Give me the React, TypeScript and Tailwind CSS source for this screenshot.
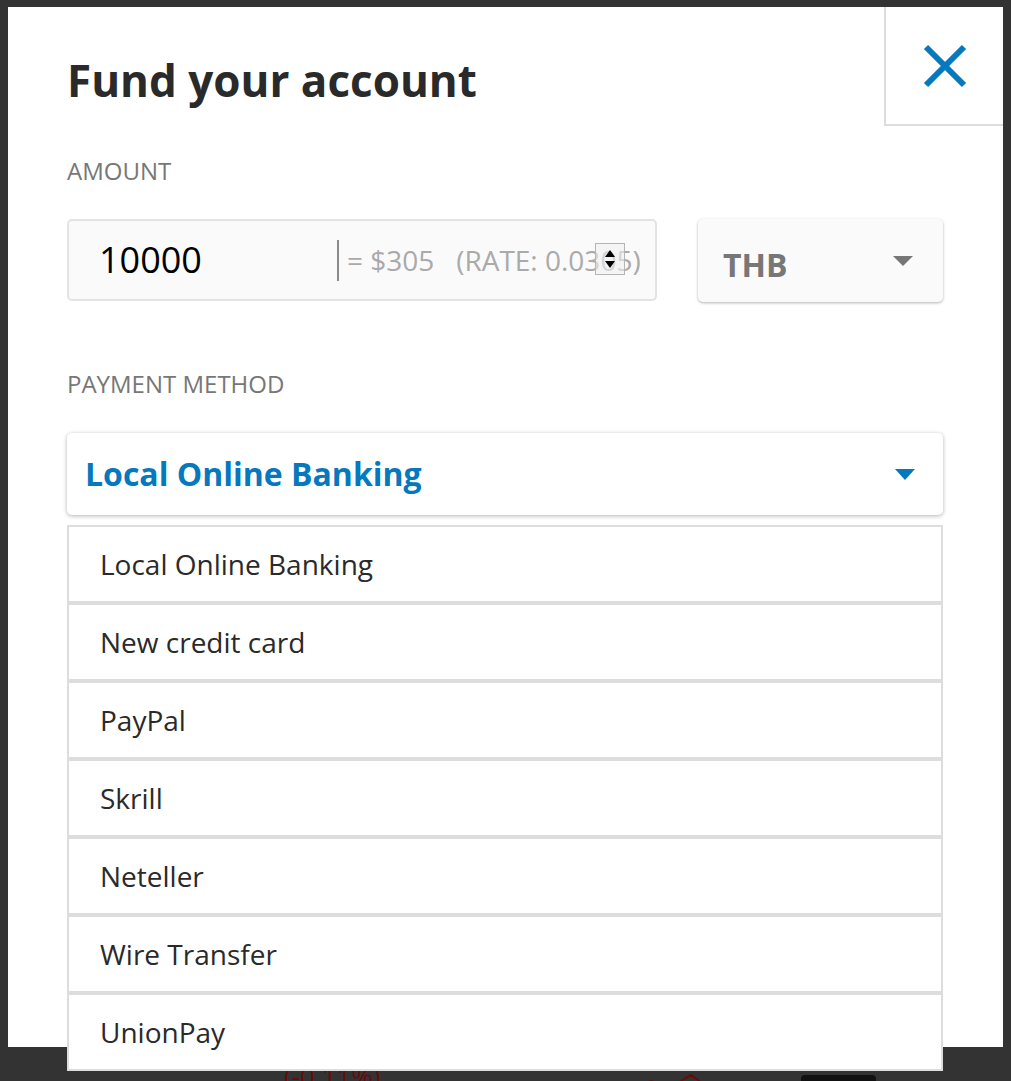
import React from "react";

const methods = [
  "Local Online Banking",
  "New credit card",
  "PayPal",
  "Skrill",
  "Neteller",
  "Wire Transfer",
  "UnionPay",
];

const App = () => {
  return (
    <div
      className="min-h-[1081px] bg-[#333333] pt-[7px] pl-[8px] overflow-hidden"
      style={{ fontFamily: '"Open Sans", "Liberation Sans", sans-serif' }}
    >
      <div className="relative w-[995px] h-[1040px] bg-white pl-[59px] pr-[60px] pt-[47px]">
        {/* close button */}
        <button className="absolute top-0 right-0 w-[119px] h-[119px] border-l-2 border-b-2 border-[#dddddd] flex items-center justify-center">
          <svg width="44" height="44" viewBox="0 0 44 44">
            <line x1="3" y1="3" x2="41" y2="41" stroke="#0678be" strokeWidth="6" />
            <line x1="41" y1="3" x2="3" y2="41" stroke="#0678be" strokeWidth="6" />
          </svg>
        </button>

        <h1 className="text-[44px] leading-[52px] font-bold text-[#2a2a2a]">
          Fund your account
        </h1>

        <div className="mt-[50px] text-[24px] leading-[30px] text-[#777777] uppercase">
          Amount
        </div>

        <div className="mt-[33px] flex gap-[41px]">
          <div className="relative w-[590px] h-[82px] bg-[#fafafa] border-2 border-[#e3e3e3] rounded-[5px] flex items-center pl-[30px]">
            <span className="w-[238px] text-[36px] text-black">10000</span>
            <div className="w-[2px] h-[41px] bg-[#8a8a8a]" />
            <span className="ml-[8px] text-[28px] text-[#aaaaaa] whitespace-nowrap">
              = $305&nbsp;&nbsp;&nbsp;(RATE: 0.0305)
            </span>
            {/* number spinner */}
            <div className="absolute left-[526px] top-[22px] w-[30px] h-[32px] border border-[#b5b5b5] bg-[#f0f0f0]/60 flex flex-col items-center justify-center gap-[4px]">
              <div className="w-0 h-0 border-l-[5px] border-r-[5px] border-b-[7px] border-l-transparent border-r-transparent border-b-black" />
              <div className="w-0 h-0 border-l-[5px] border-r-[5px] border-t-[7px] border-l-transparent border-r-transparent border-t-black" />
            </div>
          </div>

          <div className="w-[245px] h-[83px] bg-[#fafafa] rounded-[5px] shadow-[0_1px_3px_rgba(0,0,0,0.3)] flex items-center justify-between pl-[25px] pr-[30px]">
            <span className="text-[32px] font-bold text-[#777777] pt-[8px]">THB</span>
            <div className="w-0 h-0 border-l-[10px] border-r-[10px] border-t-[10px] border-l-transparent border-r-transparent border-t-[#777777]" />
          </div>
        </div>

        <div className="mt-[67px] text-[24px] leading-[30px] text-[#777777] uppercase">
          Payment Method
        </div>

        <div className="relative mt-[34px]">
          <div className="w-[876px] h-[82px] bg-white rounded-[5px] shadow-[0_1px_4px_rgba(0,0,0,0.3)] flex items-center justify-between pl-[18px] pr-[28px]">
            <span className="text-[32px] font-bold text-[#0678be]">
              Local Online Banking
            </span>
            <div className="w-0 h-0 border-l-[10px] border-r-[10px] border-t-[11px] border-l-transparent border-r-transparent border-t-[#0678be]" />
          </div>

          {/* open dropdown */}
          <ul className="absolute left-0 top-full mt-[10px] w-[876px] z-10 bg-white">
            {methods.map((m) => (
              <li
                key={m}
                className="h-[78px] border-2 border-[#dddddd] flex items-center pl-[31px] text-[28px] text-[#2a2a2a]"
              >
                {m}
              </li>
            ))}
          </ul>
        </div>
      </div>

      {/* page behind the modal */}
      <div className="h-[40px] flex items-start pt-[14px] pl-[276px]">
        <span className="text-[26px] leading-[30px] text-[#6b0a0a]">(-0.11%)</span>
        <svg className="ml-[170px] mt-[8px]" width="200" height="30" viewBox="0 0 200 30">
          <polyline
            points="0,26 20,20 40,24 60,14 80,20 100,12 120,18 140,6 170,28 200,28"
            fill="none"
            stroke="#6b0a0a"
            strokeWidth="2"
          />
        </svg>
        <span className="ml-[50px] mt-[14px] w-[75px] h-[20px] rounded-[4px] bg-[#111111]" />
      </div>
    </div>
  );
};

export default App;
